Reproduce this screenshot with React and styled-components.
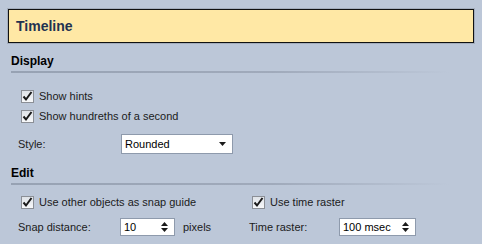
import React from "react";
import styled, { createGlobalStyle } from "styled-components";

const Global = createGlobalStyle`
  body {
    margin: 0;
    background: #bcc7d8;
    font-family: "Liberation Sans", Arial, sans-serif;
    font-size: 11px;
    color: #1b1b1b;
  }
`;

const Page = styled.div`
  width: 482px;
  height: 244px;
  overflow: hidden;
  padding-top: 8px;
  box-sizing: border-box;
`;

const Header = styled.div`
  margin: 0 7px 0 7px;
  border: 1px solid #a3adbd;
`;

const HeaderInner = styled.div`
  height: 32px;
  border: 1px solid #111;
  background: #ffe8a5;
  display: flex;
  align-items: center;
  padding-left: 7px;
  font-family: "Liberation Sans", Arial, sans-serif;
  font-weight: bold;
  font-size: 14px;
  color: #1f3251;
`;

const Section = styled.div`
  padding: 0 11px;
`;

const SectionTitle = styled.div`
  font-family: "Liberation Sans", Arial, sans-serif;
  font-weight: bold;
  font-size: 12px;
  color: #000;
  height: ${(p) => p.h}px;
  display: flex;
  align-items: flex-end;
  padding-bottom: 3px;
  box-sizing: border-box;
`;

const Rule = styled.div`
  height: 2px;
  margin-right: 22px;
  background: linear-gradient(to right, #97a2b3 0%, #a0aabb 60%, rgba(188, 199, 216, 0) 100%);
`;

const Row = styled.div`
  display: flex;
  align-items: center;
  height: ${(p) => p.h}px;
  margin-top: ${(p) => p.top || 0}px;
  padding-left: ${(p) => p.indent || 0}px;
`;

const Cell = styled.div`
  display: flex;
  align-items: center;
  width: ${(p) => (p.w ? p.w + "px" : "auto")};
  flex-shrink: 0;
`;

const Box = styled.span`
  width: 11px;
  height: 11px;
  border: 1px solid #8b8f96;
  background: linear-gradient(#dfe3e8, #f7f8fa);
  display: inline-flex;
  align-items: center;
  justify-content: center;
  margin-right: 5px;
`;

const Label = styled.span`
  font-family: "Liberation Sans", Arial, sans-serif;
  font-size: 11px;
  color: #1b1b1b;
  white-space: nowrap;
`;

const Field = styled.div`
  width: ${(p) => p.w}px;
  height: ${(p) => p.h}px;
  border: 1px solid #8e9aac;
  background: #fff;
  box-sizing: border-box;
  display: flex;
  align-items: center;
  justify-content: space-between;
  padding: 0 6px 0 3px;
  font-family: "Liberation Sans", Arial, sans-serif;
  font-size: 11px;
  color: #000;
`;

const Arrows = styled.div`
  display: flex;
  flex-direction: column;
  gap: 2px;
`;

const Check = () => (
  <Box>
    <svg width="11" height="11" viewBox="0 0 11 11">
      <path d="M1.5 5.5 L4 8.5 L9.5 1" fill="none" stroke="#1a1a1a" strokeWidth="2" />
    </svg>
  </Box>
);

const CheckItem = ({ children }) => (
  <Cell>
    <Check />
    <Label>{children}</Label>
  </Cell>
);

const Select = ({ value }) => (
  <Field w={112} h={20}>
    <span>{value}</span>
    <svg width="7" height="4" viewBox="0 0 7 4">
      <path d="M0 0 H7 L3.5 4 Z" fill="#1a1a1a" />
    </svg>
  </Field>
);

const Spin = ({ value, w }) => (
  <Field w={w} h={18}>
    <span>{value}</span>
    <Arrows>
      <svg width="7" height="4" viewBox="0 0 7 4">
        <path d="M0 4 H7 L3.5 0 Z" fill="#1a1a1a" />
      </svg>
      <svg width="7" height="4" viewBox="0 0 7 4">
        <path d="M0 0 H7 L3.5 4 Z" fill="#1a1a1a" />
      </svg>
    </Arrows>
  </Field>
);

export default function App() {
  return (
    <Page>
      <Global />
      <Header>
        <HeaderInner>Timeline</HeaderInner>
      </Header>
      <Section>
        <SectionTitle h={27}>Display</SectionTitle>
        <Rule />
        <Row h={20} top={13} indent={10}>
          <CheckItem>Show hints</CheckItem>
        </Row>
        <Row h={20} indent={10}>
          <CheckItem>Show hundreths of a second</CheckItem>
        </Row>
        <Row h={35} indent={7}>
          <Cell w={103}>
            <Label>Style:</Label>
          </Cell>
          <Select value="Rounded" />
        </Row>
        <SectionTitle h={22}>Edit</SectionTitle>
        <Rule />
        <Row h={34} indent={10}>
          <Cell w={231}>
            <CheckItem>Use other objects as snap guide</CheckItem>
          </Cell>
          <CheckItem>Use time raster</CheckItem>
        </Row>
        <Row h={15} indent={7}>
          <Cell w={102}>
            <Label>Snap distance:</Label>
          </Cell>
          <Cell w={129}>
            <Spin value="10" w={55} />
            <Label style={{ marginLeft: 8 }}>pixels</Label>
          </Cell>
          <Cell w={90}>
            <Label>Time raster:</Label>
          </Cell>
          <Spin value="100 msec" w={77} />
        </Row>
      </Section>
    </Page>
  );
}
